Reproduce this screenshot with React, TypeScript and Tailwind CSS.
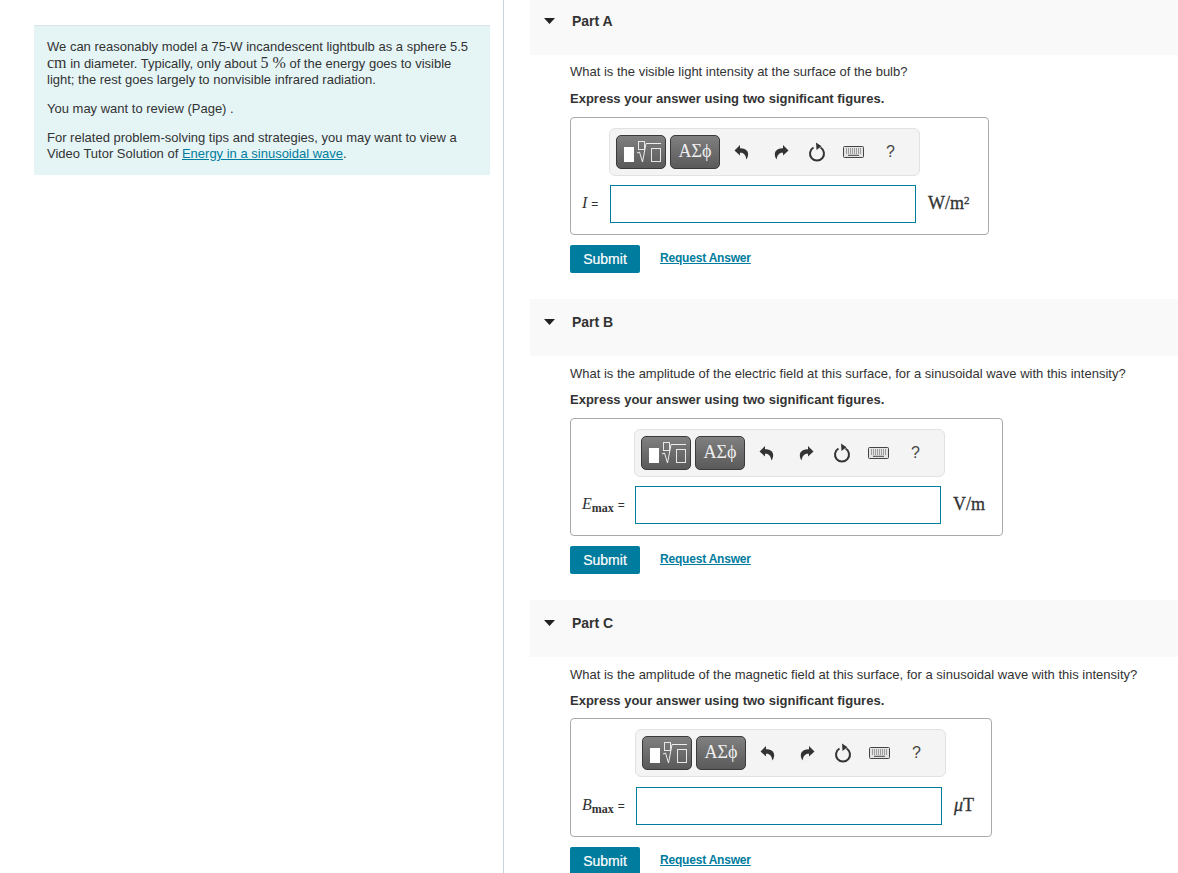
const serif = "font-['Liberation_Serif',serif]";

function SqrtButton() {
  return (
    <div className="w-[50px] h-[34px] rounded-[5px] border border-[#3a3a3a] bg-gradient-to-b from-[#808080] to-[#5a5a5a]">
      <svg width="48" height="32" viewBox="0 0 48 32">
        <rect x="7" y="11" width="10" height="15" fill="#fff" />
        <rect x="21.5" y="5.5" width="6" height="8" fill="none" stroke="#e8e8e8" strokeWidth="1" />
        <path d="M20 17 L22.5 16 L25.5 26 L29 7.5 H44" fill="none" stroke="#eee" strokeWidth="1" />
        <rect x="34.5" y="12.5" width="9" height="13" fill="none" stroke="#e8e8e8" strokeWidth="1" />
      </svg>
    </div>
  );
}

function Toolbar() {
  return (
    <div className="w-[311px] h-[48px] rounded-[6px] border border-[#e2e2e2] bg-[#f4f4f4] flex items-center pl-[6px]">
      <SqrtButton />
      <div className={`ml-[4px] w-[50px] h-[34px] rounded-[5px] border border-[#3a3a3a] bg-gradient-to-b from-[#808080] to-[#5a5a5a] flex items-center justify-center text-[18px] leading-none text-[#eeeeee] pb-[3px] ${serif}`}>
        ΑΣϕ
      </div>
      <svg className="ml-[14px]" width="16" height="16" viewBox="0 0 16 16">
        <path d="M6 1 L0.5 6.5 L6 11.5 V8.8 C9.5 8.4 11.5 10.5 12.5 15.5 C15.8 10 14.5 4.2 6 4.2 Z" fill="#333" />
      </svg>
      <svg className="ml-[23px]" width="16" height="16" viewBox="0 0 16 16">
        <path d="M10 1 L15.5 6.5 L10 11.5 V8.8 C6.5 8.4 4.5 10.5 3.5 15.5 C0.2 10 1.5 4.2 10 4.2 Z" fill="#333" />
      </svg>
      <svg className="ml-[19px]" width="18" height="20" viewBox="0 0 18 20">
        <path d="M5.5 5.5 A7 7 0 1 0 12.5 5.5" fill="none" stroke="#333" strokeWidth="2" />
        <path d="M8 0.5 L13.5 4.2 L8.5 8 Z" fill="#333" />
      </svg>
      <svg className="ml-[17px]" width="21" height="12" viewBox="0 0 21 12">
        <rect x="0.5" y="0.5" width="20" height="11" rx="1" fill="#e4e4e4" stroke="#444" />
        <path d="M3 3 H18 M3 5 H18 M3 7 H18" stroke="#555" strokeWidth="1" strokeDasharray="1 1" />
        <path d="M5 9.3 H16" stroke="#444" strokeWidth="1" />
      </svg>
      <span className="ml-[22px] text-[16px] leading-none text-[#444]">?</span>
    </div>
  );
}

type PartProps = {
  title: string;
  question: string;
  label: React.ReactNode;
  unit: React.ReactNode;
  boxClass: string;
  toolbarClass: string;
  labelClass: string;
  questionClass: string;
  boldClass: string;
  rowClass: string;
};

function Part({ title, question, label, unit, boxClass, toolbarClass, labelClass, questionClass, boldClass, rowClass }: PartProps) {
  return (
    <section className="h-[301px]">
      <div className="h-[57px] bg-[#f9f9f9] flex items-start pt-[15px] relative">
        <svg className="ml-[14px] mt-[5px]" width="11" height="6" viewBox="0 0 11 6">
          <path d="M0 0 H11 L5.5 6 Z" fill="#222" />
        </svg>
        <span className="ml-[17px] text-[14px] leading-[16px] font-bold text-[#333]">{title}</span>
      </div>
      <div className="pl-[40px]">
        <p className={`text-[13px] leading-[16px] text-[#333] whitespace-nowrap ${questionClass}`}>{question}</p>
        <p className={`text-[13px] leading-[16px] font-bold text-[#333] ${boldClass}`}>Express your answer using two significant figures.</p>
        <div className={`border border-[#aaaaaa] rounded-[4px] pt-[10px] pl-[11px] ${boxClass}`}>
          <div className={toolbarClass}>
            <Toolbar />
          </div>
          <div className={`flex items-center h-[38px] ${rowClass}`}>
            <div className={`shrink-0 -mt-[3px] text-[#333] text-[16px] whitespace-nowrap ${labelClass}`}>{label}</div>
            <div className="shrink-0 w-[306px] h-[38px] border border-[#007c9e] bg-white" />
            <div className={`ml-[12px] -mt-[1px] text-[18px] text-[#333] whitespace-nowrap [-webkit-text-stroke:0.3px_#333] ${serif}`}>{unit}</div>
          </div>
        </div>
        <div className="mt-[10px] flex items-center">
          <button className="w-[70px] h-[28px] rounded-[2px] bg-[#007c9e] text-white text-[14px] font-normal [-webkit-text-stroke:0.2px_white]">Submit</button>
          <a className="ml-[20px] -mt-[3px] text-[12px] tracking-[-0.2px] font-bold text-[#007c9e] underline">Request Answer</a>
        </div>
      </div>
    </section>
  );
}

const eq = <span className="ml-[4px] font-['Liberation_Sans',sans-serif] text-[12px]">=</span>;

export default function App() {
  return (
    <div className="h-[873px] overflow-hidden bg-white flex font-['Liberation_Sans',Arial,sans-serif]">
      <aside className="w-[504px] shrink-0 border-r border-[#c9d2de] pl-[34px] pr-[13px] pt-[25px]">
        <div className="h-[150px] border-t border-[#dde3ea] bg-[#e5f5f6] px-[13px] pt-[13px] text-[13px] leading-[16px] text-[#333]">
          <p>
            We can reasonably model a 75-W incandescent lightbulb as a sphere 5.5{" "}
            <span className={`${serif} text-[16px]`}>cm</span> in diameter. Typically, only about{" "}
            <span className={`${serif} text-[16px]`}>5 %</span> of the energy goes to visible light; the rest goes largely to nonvisible infrared radiation.
          </p>
          <p className="mt-[13px]">You may want to review (Page) .</p>
          <p className="mt-[13px]">
            For related problem-solving tips and strategies, you may want to view a Video Tutor Solution of{" "}
            <a className="text-[#007c9e] underline">Energy in a sinusoidal wave</a>.
          </p>
        </div>
      </aside>
      <main className="flex-1 ml-[26px] -mt-[2px]">
        <Part
          title="Part A"
          question="What is the visible light intensity at the surface of the bulb?"
          label={<span className={serif}><i>I</i>{eq}</span>}
          unit={<span>W/m<sup className="text-[11px]">2</sup></span>}
          boxClass="mt-[10px] w-[419px] h-[118px]"
          toolbarClass="ml-[27px]"
          labelClass="w-[28px]"
          questionClass="mt-[9px]"
          boldClass="mt-[11px]"
          rowClass="mt-[9px]"
        />
        <Part
          title="Part B"
          question="What is the amplitude of the electric field at this surface, for a sinusoidal wave with this intensity?"
          label={<span className={serif}><i>E</i><sub className="text-[12px] font-bold">max</sub>{eq}</span>}
          unit="V/m"
          boxClass="mt-[10px] w-[433px] h-[118px]"
          toolbarClass="ml-[52px]"
          labelClass="w-[53px]"
          questionClass="mt-[10px]"
          boldClass="mt-[10px]"
          rowClass="mt-[9px]"
        />
        <Part
          title="Part C"
          question="What is the amplitude of the magnetic field at this surface, for a sinusoidal wave with this intensity?"
          label={<span className={serif}><i>B</i><sub className="text-[12px] font-bold">max</sub>{eq}</span>}
          unit={<span><i>μ</i>T</span>}
          boxClass="mt-[9px] w-[422px] h-[119px]"
          toolbarClass="ml-[53px]"
          labelClass="w-[54px]"
          questionClass="mt-[10px]"
          boldClass="mt-[10px]"
          rowClass="mt-[10px]"
        />
      </main>
    </div>
  );
}
